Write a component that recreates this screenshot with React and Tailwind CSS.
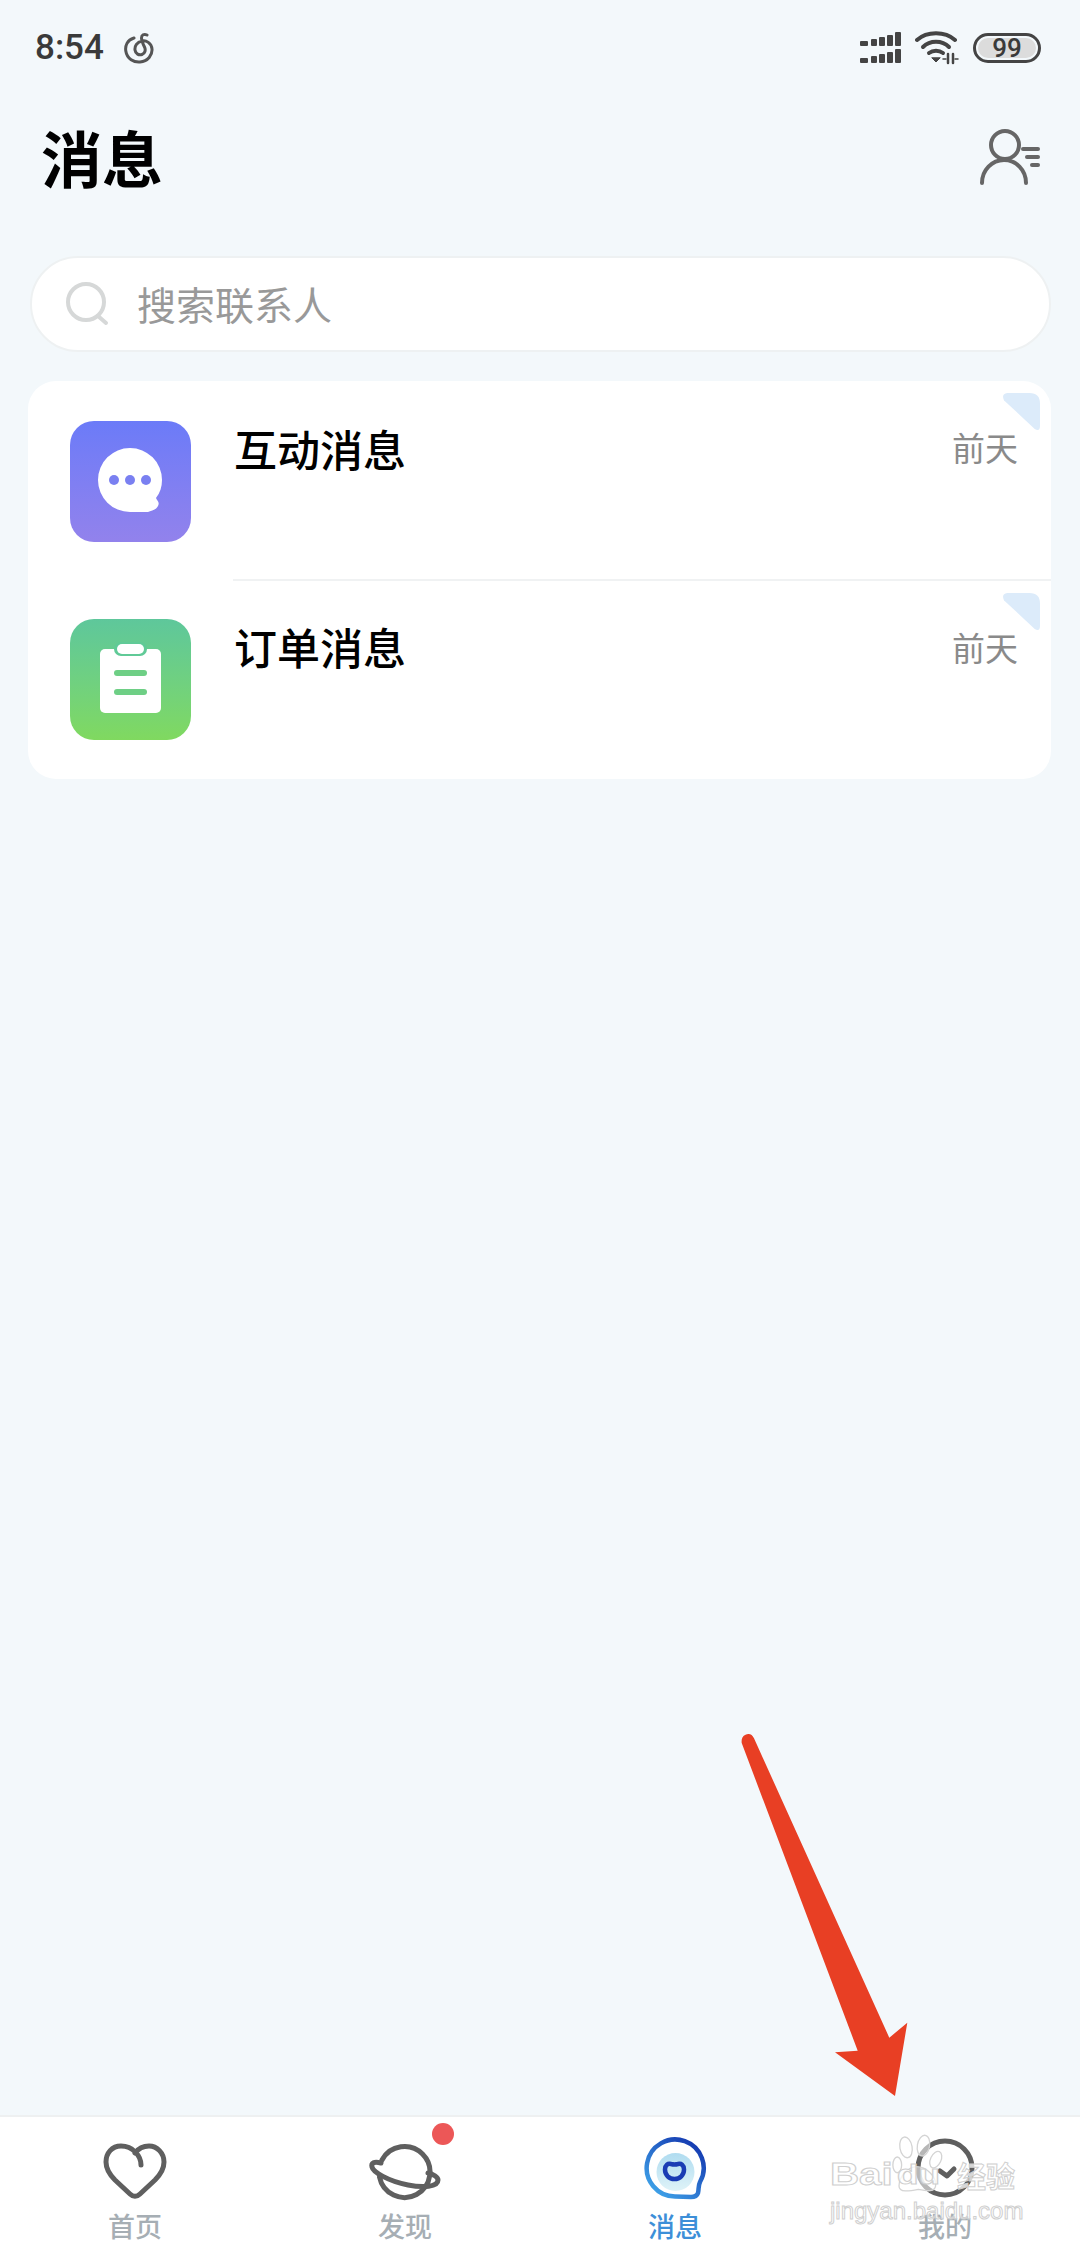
import React from "react";

const cjk = "font-['Noto_Sans_CJK_SC','Noto_Sans',sans-serif]";

const SignalIcon = () => (
  <svg width="42" height="32" viewBox="0 0 42 32" fill="#444">
    {/* top row */}
    <rect x="0" y="9" width="8" height="5" rx="1" />
    <rect x="11" y="7" width="6" height="7" rx="1" />
    <rect x="19" y="5" width="6" height="9" rx="1" />
    <rect x="27" y="3" width="6" height="11" rx="1" />
    <rect x="35" y="0" width="6" height="14" rx="1" />
    {/* bottom row */}
    <rect x="0" y="26" width="8" height="5" rx="1" />
    <rect x="11" y="24" width="6" height="7" rx="1" />
    <rect x="19" y="22" width="6" height="9" rx="1" />
    <rect x="27" y="20" width="6" height="11" rx="1" />
    <rect x="35" y="17" width="6" height="14" rx="1" />
  </svg>
);

const WifiIcon = () => (
  <svg width="44" height="34" viewBox="0 0 44 34" fill="none" stroke="#444" strokeWidth="4" strokeLinecap="round">
    <path d="M2 9 C12 0 30 0 40 9" />
    <path d="M8 16 C15 9 27 9 34 16" />
    <path d="M14 22 C18 19 24 19 28 22" />
    <path d="M17 27 L21 31 L25 27 Z" fill="#444" strokeWidth="1" />
    <path d="M33 23 V32 M38 23 V32" strokeWidth="2.5" />
    <path d="M28 28 H31 M40 28 H43" strokeWidth="1.5" />
  </svg>
);

const MusicIcon = () => (
  <svg width="30" height="32" viewBox="0 0 30 32" fill="none" stroke="#555" strokeWidth="3" strokeLinecap="round">
    <path d="M10 6 C3 8 1 14 1.8 19 C3 27 10 30.5 16 30 C24 29.5 28.5 23 28 17 C27.5 11 22 8 18 9 C13 10 10.5 14 11 18 C11.5 22 15 23.5 18 22.5 C21 21.5 22 18 20.5 15 C19 12 17.5 8 17.5 6 C17.5 3 20 1.5 23 3" />
  </svg>
);

const UserListIcon = () => (
  <svg width="62" height="58" viewBox="0 0 62 58" fill="none" stroke="#666" strokeWidth="4" strokeLinecap="round">
    <circle cx="26" cy="16" r="14" />
    <path d="M3 54 C3 41 13 31 25 31 C37 31 47 41 47 54" />
    <path d="M44 20 H59" />
    <path d="M48 28 H59" />
    <path d="M53 36 H59" />
  </svg>
);

const SearchIcon = () => (
  <svg width="44" height="46" viewBox="0 0 44 46" fill="none" stroke="#d6d8d8" strokeWidth="4" strokeLinecap="round">
    <circle cx="20" cy="21" r="18" />
    <path d="M32 35 L40 42" />
  </svg>
);

const ChatGlyph = () => (
  <svg width="121" height="121" viewBox="0 0 121 121">
    <path
      fill="#fff"
      d="M60 27 A32 32 0 0 1 92 59 C92 66 90 72 86 77 C87 80 90 81 88 85 C86 89 81 90 78 91 L60 91 A32 32 0 1 1 60 27 Z"
    />
    <circle cx="44" cy="59" r="5" fill="#7a80f1" />
    <circle cx="60" cy="59" r="5" fill="#7a80f1" />
    <circle cx="76" cy="59" r="5" fill="#7a80f1" />
  </svg>
);

const ClipboardGlyph = () => (
  <svg width="121" height="121" viewBox="0 0 121 121">
    <rect x="30" y="30" width="61" height="64" rx="5" fill="#fff" />
    <rect x="44" y="23" width="33" height="14" rx="7" fill="#60ca97" />
    <rect x="47" y="25" width="27" height="10" rx="5" fill="#fff" />
    <rect x="44" y="51" width="33" height="6" rx="3" fill="#6ecf85" />
    <rect x="44" y="70" width="33" height="6" rx="3" fill="#6ecf85" />
  </svg>
);

const CornerMark = () => (
  <svg className="absolute right-[11px] top-[12px]" width="38" height="38" viewBox="0 0 36 36" fill="#dcebfa">
    <path d="M5 0 H26 Q36 0 36 10 V31 Q36 37 31 34 L2 7 Q-1 1 5 0 Z" />
  </svg>
);

const HeartIcon = () => (
  <svg width="64" height="60" viewBox="0 0 64 60" fill="none" stroke="#5f5f5f" strokeWidth="5" strokeLinecap="round" strokeLinejoin="round">
    <path d="M38 24 C38 15 30 5 18 5 C9 5 3 12 3 21 C3 28 7 34 12 39 L27 53 C30 56 34 56 37 53 L52 39 C57 34 61 28 61 21 C61 12 54 5 46 5 C40 5 35 8 32 12" />
  </svg>
);

const PlanetIcon = () => (
  <svg width="74" height="64" viewBox="0 0 74 64" fill="none" stroke="#5f5f5f" strokeWidth="5" strokeLinecap="round">
    <path d="M14 21 A25.5 25.5 0 1 1 11.5 38" />
    <path d="M13 24 C6 22 3 24 4 28 C5 33 20 42 40 46 C55 49 70 48 70 41 C70 38 65 35 60 34" />
  </svg>
);

const MessageIcon = () => (
  <svg className="-translate-y-[3px]" width="66" height="66" viewBox="0 0 66 66" fill="none">
    <defs>
      <linearGradient id="ring" x1="0.9" y1="0" x2="0.1" y2="1">
        <stop offset="0" stopColor="#1233ad" />
        <stop offset="1" stopColor="#41a9ec" />
      </linearGradient>
      <linearGradient id="blob" x1="0" y1="0" x2="0" y2="1">
        <stop offset="0" stopColor="#b0dcf0" />
        <stop offset="1" stopColor="#dff3f8" />
      </linearGradient>
    </defs>
    <circle cx="33.5" cy="37" r="19" fill="url(#blob)" />
    <path
      stroke="url(#ring)"
      strokeWidth="4.500"
      strokeLinecap="round"
      d="M33 61.500 A28.500 28.500 0 1 1 58 47 C56 51 57 54 56 58 C55 61 52 62 49 62 L33 61.500"
    />
    <path
      stroke="#1a3cb4"
      strokeWidth="4.500"
      d="M32.500 44 C27 44 23 40 23 34.500 C23 30 26 28 29 29 C31 29.500 34 29.500 36 29 C39 28 42 30 42 34.500 C42 40 38 44 32.500 44 Z"
    />
  </svg>
);

const MineIcon = () => (
  <svg className="-translate-y-[3px]" width="62" height="64" viewBox="0 0 62 64" fill="none" stroke="#5f5f5f" strokeWidth="5" strokeLinecap="round" strokeLinejoin="round">
    <circle cx="31" cy="32" r="27" />
    <path d="M26 35 L33 40 L40 33" />
  </svg>
);

const Tab = ({ icon, label, active }) => (
  <div className="flex flex-col items-center pt-[20px]">
    <div className="h-[68px] flex items-center justify-center">{icon}</div>
    <span className={`${cjk} mt-[6px] text-[27px] leading-[30px] font-medium ${active ? "text-[#3d8fd8]" : "text-[#a6aeb4]"}`}>
      {label}
    </span>
  </div>
);

const MessageRow = ({ title, tile, glyph, className }) => (
  <div className={`relative flex pl-[42px] ${className}`}>
    <div className={`w-[121px] h-[121px] rounded-[24px] ${tile}`}>{glyph}</div>
    <div className={`${cjk} ml-[43px] mt-[1px] text-[43px] leading-[52px] font-medium text-black`}>{title}</div>
    <div className={`${cjk} absolute right-[33px] top-[47px] text-[33px] leading-[38px] text-[#8a8a8a]`}>前天</div>
    <CornerMark />
  </div>
);

export default function App() {
  return (
    <div className="relative w-[1080px] h-[2248px] overflow-hidden flex flex-col bg-[#f3f8fb]">
      {/* status bar */}
      <div className="h-[96px] flex items-center pl-[35px] pr-[39px] shrink-0">
        <span className="font-['Roboto',sans-serif] text-[35px] font-medium text-[#3a3a3a]">8:54</span>
        <div className="ml-[20px]">
          <MusicIcon />
        </div>
        <div className="ml-auto flex items-center">
          <SignalIcon />
          <div className="ml-[13px]">
            <WifiIcon />
          </div>
          <div className="ml-[14px] w-[68px] h-[30px] rounded-full border-[3px] border-[#444] p-[2px]">
            <div className="w-full h-full rounded-full bg-[#dcdcdc] flex items-center justify-center font-['Roboto',sans-serif] text-[26px] font-medium leading-none text-[#3a3a3a]">
              99
            </div>
          </div>
        </div>
      </div>

      {/* title */}
      <div className="h-[160px] shrink-0 flex items-start justify-between pl-[41px] pr-[39px]">
        <h1 className={`${cjk} text-[61px] leading-[122px] font-bold text-black`}>消息</h1>
        <div className="mt-[33px]">
          <UserListIcon />
        </div>
      </div>

      {/* search */}
      <div className="ml-[30px] mr-[29px] h-[96px] shrink-0 rounded-full bg-white border-2 border-[#eef1f2] flex items-center pl-[34px]">
        <SearchIcon />
        <span className={`${cjk} ml-[27px] text-[39px] -translate-y-px text-[#999999]`}>搜索联系人</span>
      </div>

      {/* list */}
      <div className="mt-[29px] ml-[28px] mr-[29px] h-[398px] shrink-0 rounded-[28px] bg-white flex flex-col">
        <MessageRow
          title="互动消息"
          tile="bg-linear-to-b from-[#6b7bf8] to-[#9282ec]"
          glyph={<ChatGlyph />}
          className="h-[198px] pt-[40px]"
        />
        <div className="ml-[205px] h-[2px] bg-[#f0f2f3]" />
        <MessageRow
          title="订单消息"
          tile="bg-linear-to-b from-[#5ec79b] to-[#80d95f]"
          glyph={<ClipboardGlyph />}
          className="flex-1 pt-[38px]"
        />
      </div>

      <div className="flex-1" />

      {/* bottom tabs */}
      <div className="relative h-[133px] shrink-0 bg-white border-t-2 border-[#eef0f1] grid grid-cols-4">
        <Tab icon={<HeartIcon />} label="首页" />
        <Tab icon={<PlanetIcon />} label="发现" />
        <Tab icon={<MessageIcon />} label="消息" active />
        <Tab icon={<MineIcon />} label="我的" />
        <span className="absolute left-[432px] top-[6px] w-[22px] h-[22px] rounded-full bg-[#ec5757]" />
      </div>

      {/* watermark */}
      <div className="absolute left-[830px] top-[2133px] w-[192px] h-[96px] font-['Liberation_Sans',sans-serif] text-transparent">
        <svg className="absolute left-[62px] top-0" width="56" height="62" viewBox="0 0 64 66" fill="#ffffff" fillOpacity="0.55" stroke="#d4d4d4" strokeWidth="1.500">
          <ellipse cx="16" cy="14" rx="7" ry="12" transform="rotate(-10 16 14)" />
          <ellipse cx="36" cy="12" rx="7" ry="12" transform="rotate(10 36 12)" />
          <ellipse cx="6" cy="34" rx="5" ry="9" />
          <ellipse cx="50" cy="28" rx="6" ry="10" transform="rotate(25 50 28)" />
          <path d="M8 58 C8 48 18 36 28 36 C40 36 50 48 50 56 C50 66 40 64 30 62 C20 64 8 66 8 58 Z" />
        </svg>
        <div className="absolute left-0 top-[24px] flex items-center whitespace-nowrap leading-[36px] font-bold text-[#ffffffc0] [-webkit-text-stroke:1px_#cfcfcf]">
          <span className="inline-block w-[67px] text-[31px] origin-left scale-x-[1.3]">Bai</span>
          <span className="inline-block w-[60px] text-[27px] origin-left scale-x-[1.3]">du</span>
          <span className={`${cjk} text-[29px]`}>经验</span>
        </div>
        <div className="absolute left-0 top-[63px] w-full text-[24px] leading-[30px] whitespace-nowrap text-[#ffffffa0] [-webkit-text-stroke:1px_#cfcfcf]">
          jingyan.baidu.com
        </div>
      </div>

      {/* red annotation arrow */}
      <svg className="absolute left-[730px] top-[1725px]" width="190" height="380" viewBox="730 1725 190 380">
        <path
          fill="#e83f24"
          d="M741.700 1743 Q741 1737 745 1735 Q751 1732 754 1738.300 L889.300 2037.700 L907.300 2022.700 L895 2096 L835 2052.300 L857.700 2050.700 Z"
        />
      </svg>
    </div>
  );
}
